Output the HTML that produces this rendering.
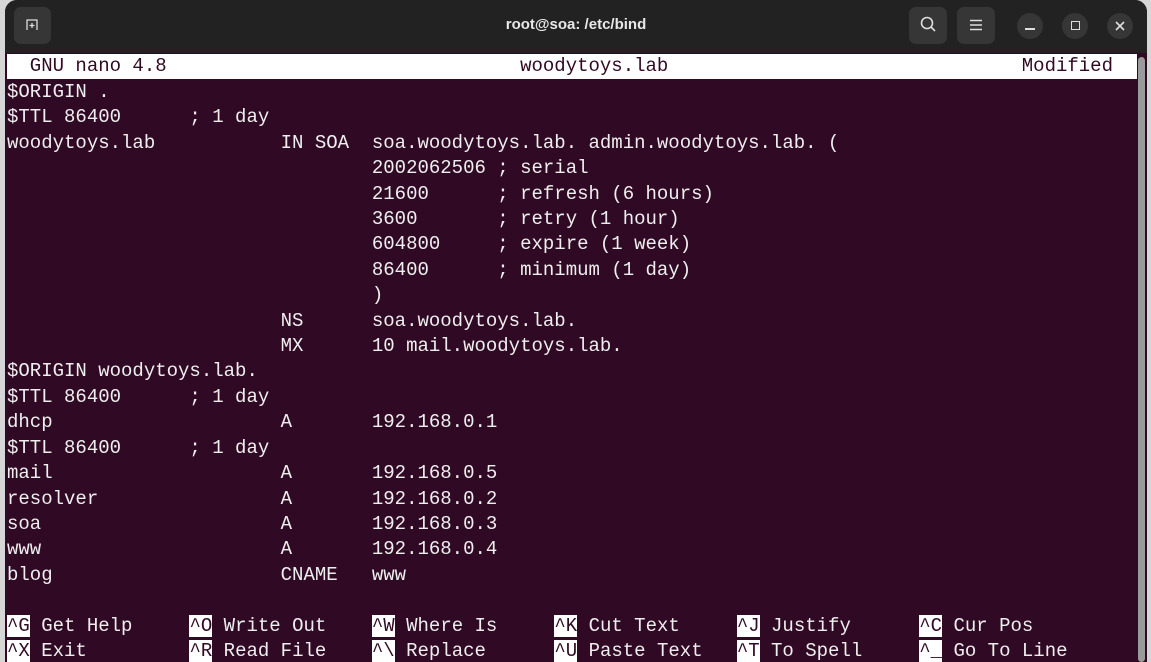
<!DOCTYPE html>
<html><head><meta charset="utf-8"><style>
html,body{margin:0;padding:0;width:1151px;height:662px;overflow:hidden;background:#d6d6d6;}
.win{position:absolute;left:5px;top:0;width:1142px;height:662px;background:#300a24;border-radius:12px 12px 0 0;overflow:hidden;}
.tb{position:absolute;left:0;top:0;width:100%;height:53px;background:#222222;}
.title{position:absolute;left:0;width:1142px;top:16px;text-align:center;color:#e8e8e8;font:bold 15px "Liberation Sans",sans-serif;}
.btn{position:absolute;background:#363636;border-radius:7px;}
.cb{position:absolute;top:13px;width:26px;height:26px;border-radius:50%;background:#363636;}
.t{position:absolute;left:2px;font:19px "Liberation Mono",monospace;color:#eeeeee;white-space:pre;line-height:25.4px;}
.hdr{position:absolute;left:2px;top:54px;width:1130px;height:25px;background:#ffffff;}
.k{background:#ffffff;color:#300a24;}
.sb{position:absolute;left:1133px;top:57px;width:7px;height:605px;background:#9a9a9a;border-radius:4px;}
</style></head><body>
<div class="win">
<div class="tb">
 <div class="btn" style="left:9px;top:7px;width:37px;height:37px;"></div>
 <svg style="position:absolute;left:20px;top:18px" width="14" height="14" viewBox="0 0 14 14"><path d="M2 12V2h10v10M7 5v5M4.5 7.5h5" stroke="#ddd" stroke-width="1.3" fill="none"/></svg>
 <div class="title">root@soa: /etc/bind</div>
 <div class="btn" style="left:904px;top:7px;width:38px;height:37px;"></div>
 <svg style="position:absolute;left:914px;top:15px" width="18" height="18" viewBox="0 0 18 18"><circle cx="8" cy="8" r="5.5" stroke="#ddd" stroke-width="1.6" fill="none"/><path d="M12 12l4 4" stroke="#ddd" stroke-width="1.6"/></svg>
 <div class="btn" style="left:952px;top:7px;width:38px;height:37px;"></div>
 <svg style="position:absolute;left:964px;top:19px" width="14" height="12"><path d="M1 1.5h12M1 6h12M1 10.5h12" stroke="#ddd" stroke-width="1.4"/></svg>
 <div class="cb" style="left:1012px"></div><div style="position:absolute;left:1020px;top:28px;width:10px;height:2px;background:#ddd"></div>
 <div class="cb" style="left:1057px"></div><div style="position:absolute;left:1066px;top:21px;width:7px;height:7px;border:1.5px solid #ddd"></div>
 <div class="cb" style="left:1102px"></div><svg style="position:absolute;left:1109px;top:20px" width="12" height="12"><path d="M2 2l8 8M10 2l-8 8" stroke="#ddd" stroke-width="1.6"/></svg>
</div>
<div class="hdr"></div>
<div class="t" style="top:54px;color:#300a24">  GNU nano 4.8                               woodytoys.lab                               Modified</div>
<div class="t" style="top:80px">$ORIGIN .
$TTL 86400      ; 1 day
woodytoys.lab           IN SOA  soa.woodytoys.lab. admin.woodytoys.lab. (
                                2002062506 ; serial
                                21600      ; refresh (6 hours)
                                3600       ; retry (1 hour)
                                604800     ; expire (1 week)
                                86400      ; minimum (1 day)
                                )
                        NS      soa.woodytoys.lab.
                        MX      10 mail.woodytoys.lab.
$ORIGIN woodytoys.lab.
$TTL 86400      ; 1 day
dhcp                    A       192.168.0.1
$TTL 86400      ; 1 day
mail                    A       192.168.0.5
resolver                A       192.168.0.2
soa                     A       192.168.0.3
www                     A       192.168.0.4
blog                    CNAME   www

<span class="k">^G</span> Get Help     <span class="k">^O</span> Write Out    <span class="k">^W</span> Where Is     <span class="k">^K</span> Cut Text     <span class="k">^J</span> Justify      <span class="k">^C</span> Cur Pos
<span class="k">^X</span> Exit         <span class="k">^R</span> Read File    <span class="k">^\</span> Replace      <span class="k">^U</span> Paste Text   <span class="k">^T</span> To Spell     <span class="k">^_</span> Go To Line</div>
<div class="sb"></div>
</div>
</body></html>
